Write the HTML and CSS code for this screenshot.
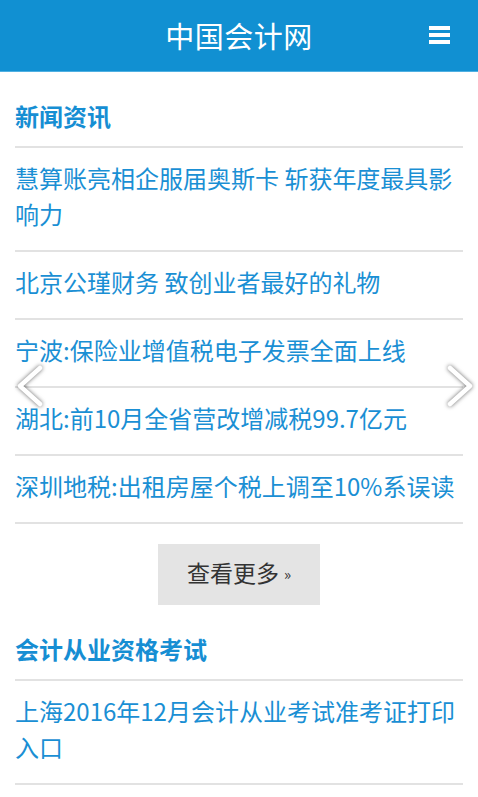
FILE: index.html
```html
<!DOCTYPE html>
<html lang="zh-CN">

<head>
	<meta charset="UTF-8">
	<meta name="viewport" content="width=device-width, initial-scale=1.0">
	<title>中国会计网</title>
	<link rel="stylesheet" href="styles.css">
</head>

<body>
	<header class="topbar">
		<h1 class="logo">中国会计网</h1>
		<a class="menu-btn" href="#">
			<span></span><span></span><span></span>
		</a>
	</header>

	<div class="main">
		<section class="block">
			<h3 class="block-title">新闻资讯</h3>
			<ul class="news">
				<li><a href="#">慧算账亮相企服届奥斯卡 斩获年度最具影响力</a></li>
				<li><a href="#">北京公瑾财务 致创业者最好的礼物</a></li>
				<li><a href="#">宁波:保险业增值税电子发票全面上线</a></li>
				<li><a href="#">湖北:前10月全省营改增减税99.7亿元</a></li>
				<li><a href="#">深圳地税:出租房屋个税上调至10%系误读</a></li>
			</ul>
			<!-- 翻页箭头 -->
			<a class="arrow arrow-prev" href="#">
				<svg width="30" height="44" viewBox="0 0 30 44"><polyline points="25,4 5,22 25,40" /></svg>
			</a>
			<a class="arrow arrow-next" href="#">
				<svg width="30" height="44" viewBox="0 0 30 44"><polyline points="5,4 25,22 5,40" /></svg>
			</a>
			<div class="more-wrap">
				<a class="more" href="#">查看更多<small>»</small></a>
			</div>
		</section>

		<section class="block">
			<h3 class="block-title">会计从业资格考试</h3>
			<ul class="news">
				<li><a href="#">上海2016年12月会计从业考试准考证打印入口</a></li>
			</ul>
		</section>
	</div>
</body>

</html>
```

FILE: styles.css
```css
body {
	margin: 0;
	font-family: "Noto Sans CJK SC", sans-serif;
	background: #fff;
}

a {
	text-decoration: none;
}

.topbar {
	position: relative;
	height: 71px;
	background: #1190d2;
	border-bottom: 1px solid #4fb0e2;
	display: flex;
	align-items: center;
	justify-content: center;
}

.logo {
	margin: 0 0 2px;
	font-size: 29px;
	font-weight: normal;
	color: #fff;
	letter-spacing: 0.5px;
}

.menu-btn {
	position: absolute;
	right: 28px;
	top: 26px;
	display: flex;
	flex-direction: column;
	gap: 3px;
	width: 21px;
}

.menu-btn span {
	display: block;
	height: 4px;
	background: #fff;
}

.main {
	padding: 0 15px;
}

.block {
	position: relative;
}

.block-title {
	margin: 26px 0 0;
	padding-bottom: 12px;
	font-size: 24px;
	line-height: 36px;
	color: #168ed3;
	border-bottom: 2px solid #e2e2e2;
}

.news {
	list-style: none;
	margin: 0;
	padding: 0;
}

.news li {
	padding: 12px 0 18px;
	border-bottom: 2px solid #e2e2e2;
	font-size: 24px;
	line-height: 36px;
}

.news a {
	color: #1a8fd4;
}

.arrow {
	position: absolute;
	top: 266px;
	filter: drop-shadow(0 0 2px rgba(0, 0, 0, 0.6));
}

.arrow polyline {
	fill: none;
	stroke: #fff;
	stroke-width: 4.5;
	stroke-linecap: round;
	stroke-linejoin: round;
}

.arrow-prev {
	left: 0;
}

.arrow-next {
	right: -12px;
}

.more-wrap {
	display: flex;
	justify-content: center;
	padding-top: 20px;
}

.more {
	display: flex;
	align-items: center;
	justify-content: center;
	box-sizing: border-box;
	width: 162px;
	height: 61px;
	padding-bottom: 5px;
	background: #e4e4e4;
	color: #333;
	font-size: 23px;
}

.more small {
	font-size: 15px;
	margin-left: 5px;
	margin-top: 2px;
}
```
